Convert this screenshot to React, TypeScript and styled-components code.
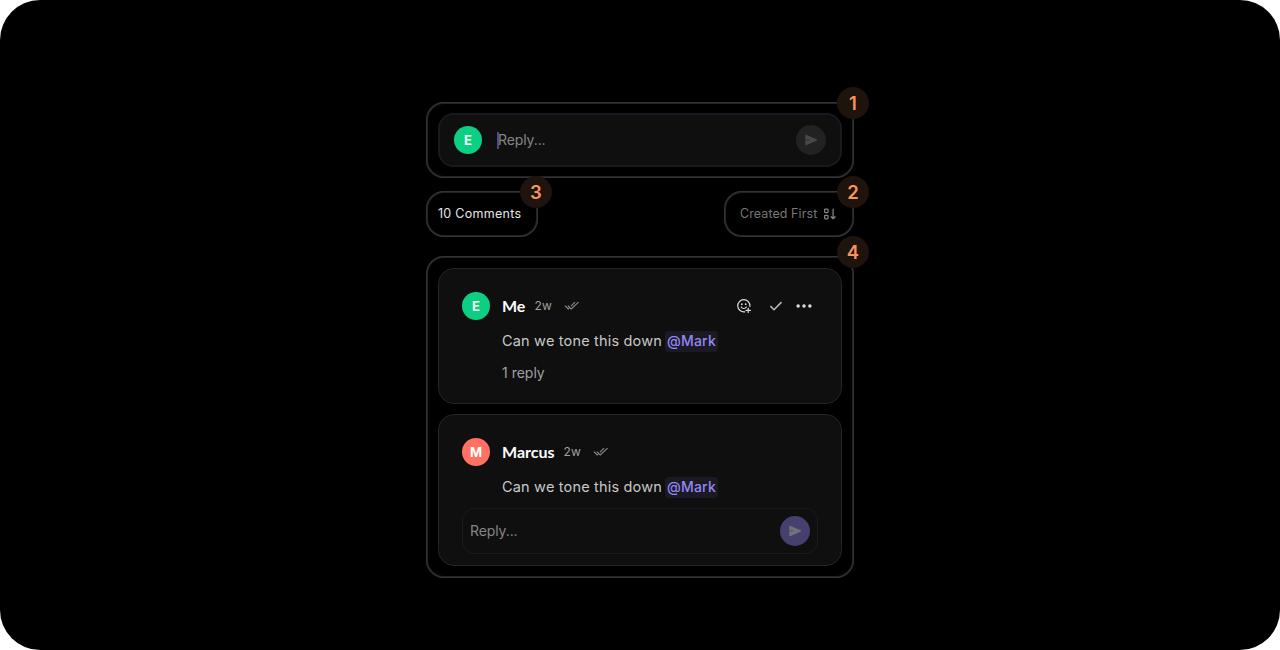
import React from "react";
import styled, { createGlobalStyle } from "styled-components";

const Global = createGlobalStyle`
  *, *::before, *::after { box-sizing: border-box; }
  body { margin: 0; background: #fff; font-family: Inter, "Open Sans", sans-serif; }
`;

const Stage = styled.main`
  width: 1280px;
  height: 650px;
  background: #000;
  border-radius: 40px;
  display: flex;
  flex-direction: column;
  align-items: center;
  padding-top: 102px;
`;

const Column = styled.div`
  width: 428px;
  display: flex;
  flex-direction: column;
`;

const Frame = styled.section<{ $w?: number; $h: number; $mt?: number }>`
  position: relative;
  width: ${(p) => (p.$w ? `${p.$w}px` : "100%")};
  height: ${(p) => p.$h}px;
  margin-top: ${(p) => p.$mt ?? 0}px;
  border-radius: 18px;
  box-shadow: inset 0 0 0 1px #343434, inset 0 0 0 2px #222;
  padding: 12px;
  display: flex;
  flex-direction: column;
`;

const Badge = styled.span<{ $top?: number; $right?: number }>`
  position: absolute;
  top: ${(p) => p.$top ?? -15}px;
  right: ${(p) => p.$right ?? -15}px;
  width: 32px;
  height: 32px;
  border-radius: 50%;
  background: #1e130d;
  color: #f7935c;
  font: 600 18.5px/33px Inter, sans-serif;
  text-align: center;
`;

const Text = styled.span<{ $size: number; $color: string; $ls?: number; $ml?: number }>`
  font-size: ${(p) => p.$size}px;
  line-height: 20px;
  color: ${(p) => p.$color};
  letter-spacing: ${(p) => p.$ls ?? 0}px;
  margin-left: ${(p) => p.$ml ?? 0}px;
  white-space: nowrap;
`;

const Name = styled.strong`
  font: 700 16px/20px Lato, sans-serif;
  color: #fff;
  margin-left: 12px;
`;

const Composer = styled.div`
  flex: none;
  margin-top: -1px;
  height: 54px;
  border-radius: 16px;
  background: #0f0f0f;
  box-shadow: inset 0 0 0 1px #1b1a24, inset 0 0 0 2px #17171d;
  display: flex;
  align-items: center;
  padding: 0 16px;
`;

const Avatar = styled.span<{ $bg: string }>`
  width: 28px;
  height: 28px;
  border-radius: 50%;
  background: ${(p) => p.$bg};
  color: #fff;
  font: 700 13px/29px Inter, sans-serif;
  text-align: center;
  flex: none;
`;

const Caret = styled.i`
  width: 2px;
  height: 17px;
  margin-left: 15px;
  margin-right: -1px;
  background: #504a88;
`;

const SendButton = styled.button<{ $bg: string; $fg: string }>`
  width: 30px;
  height: 30px;
  margin-left: auto;
  border: 0;
  padding: 0;
  border-radius: 50%;
  background: ${(p) => p.$bg};
  color: ${(p) => p.$fg};
  display: grid;
  place-items: center;
`;

const Toolbar = styled.div`
  display: flex;
  justify-content: space-between;
  margin-top: 13px;
`;

const InlineRow = styled.div`
  display: flex;
  align-items: center;
  height: 22px;
  white-space: nowrap;
`;

const Card = styled.article<{ $h: number }>`
  height: ${(p) => p.$h}px;
  flex: none;
  border-radius: 16px;
  border: 1px solid #242424;
  background: #0f0f0f;
  padding: 23px;
  & + & { margin-top: 10px; }
`;

const Header = styled.header`
  display: flex;
  align-items: center;
  height: 28px;
`;

const Actions = styled.div`
  display: flex;
  align-items: center;
  margin-left: auto;
  margin-right: 6px;
  color: #ddd;
`;

const Body = styled.div<{ $mt: number }>`
  margin: ${(p) => p.$mt}px 0 0 40px;
  height: 21px;
  display: flex;
  align-items: center;
`;

const MessageText = styled.span`
  width: 163px;
  font-size: 14.5px;
  line-height: 20px;
  letter-spacing: 0.18px;
  padding-bottom: 1px;
  color: #c8c8c8;
  white-space: nowrap;
`;

const Mention = styled.span`
  width: 53px;
  height: 21px;
  border-radius: 4px;
  background: #1b1924;
  color: #9388f5;
  font-size: 14px;
  line-height: 20px;
  letter-spacing: 0.2px;
  font-weight: 500;
  text-align: center;
  white-space: nowrap;
`;

const ReplyCount = styled.span`
  font-size: 14px;
  line-height: 20px;
  padding-bottom: 2px;
  color: #a0a0a0;
  white-space: nowrap;
`;

const ReplyBox = styled.div`
  margin-top: 10px;
  height: 46px;
  border: 1px solid #1a1a1a;
  border-radius: 12px;
  padding: 0 7px;
  display: flex;
  align-items: center;
`;

const SendIcon = () => (
  <svg width="14" height="14" viewBox="0 0 14 14" fill="currentColor">
    <path d="M1.2 2.5C1.1 1.9 1.6 1.6 2.1 1.8L12.6 6.3C13.2 6.6 13.2 7.4 12.6 7.7L2.1 12.2C1.6 12.4 1.1 12 1.2 11.5V7.6L5.4 7.3V6.7L1.2 6.4Z" />
  </svg>
);

const DoubleCheck = () => (
  <svg width="16" height="10" viewBox="0 0 16 10" fill="none" stroke="#8c8c8c" strokeWidth="1.1">
    <path d="M.9 4.7L4.2 8L5.1 7.1M11 1.2L7 5.2M3.9 4.7L7.2 8L14.6 1.2" />
  </svg>
);

const SortIcon = () => (
  <svg width="14" height="14" viewBox="0 0 14 14" fill="none" stroke="#858585" strokeWidth="1.25" strokeLinejoin="round" strokeLinecap="round">
    <rect x="1.6" y="2" width="3.4" height="3.6" rx=".8" />
    <rect x="1.6" y="8.3" width="3.4" height="3.6" rx=".8" />
    <path d="M10.1 2.2V11.6M8.1 9.7L10.1 11.7L12.1 9.7" />
  </svg>
);

const EmojiIcon = () => (
  <svg width="16" height="16" viewBox="0 0 16 16" fill="none" stroke="currentColor" strokeWidth="1.2" strokeLinecap="round">
    <path d="M13.9 8.3A6.1 6.1 0 1 0 8.8 13.8" />
    <path d="M5.2 9C6.2 11 9.3 11 10.3 9" />
    <path d="M12.2 10.2V14.6M10 12.4H14.4" />
    <circle cx="5.8" cy="6.2" r=".9" fill="currentColor" stroke="none" />
    <circle cx="9.7" cy="6.2" r=".9" fill="currentColor" stroke="none" />
  </svg>
);

const CheckIcon = () => (
  <svg width="14" height="12" viewBox="0 0 14 12" fill="none" stroke="#bbb" strokeWidth="1.5">
    <path d="M1.4 6.1L5 9.7L12.5 2.1" />
  </svg>
);

const MoreIcon = () => (
  <svg width="16" height="6" viewBox="0 0 16 6" fill="currentColor">
    <circle cx="2.1" cy="3" r="1.75" />
    <circle cx="8" cy="3" r="1.75" />
    <circle cx="13.9" cy="3" r="1.75" />
  </svg>
);

const Gap = styled.span<{ $w: number }>`
  width: ${(p) => p.$w}px;
  flex: none;
`;

const CommentHead = ({ initial, color, name, children }: { initial: string; color: string; name: string; children?: React.ReactNode }) => (
  <Header>
    <Avatar $bg={color}>{initial}</Avatar>
    <Name>{name}</Name>
    <Text $size={12} $color="#a0a0a0" $ml={9} $ls={0.2}>2w</Text>
    <Gap $w={12} />
    <DoubleCheck />
    {children}
  </Header>
);

const Message = () => (
  <Body $mt={11}>
    <MessageText>Can we tone this down</MessageText>
    <Mention>@Mark</Mention>
  </Body>
);

export default function App() {
  return (
    <>
      <Global />
      <Stage>
        <Column>
          <Frame $h={76}>
            <Composer>
              <Avatar $bg="#0dcf82">E</Avatar>
              <Caret />
              <Text $size={14} $color="#858585" $ls={-0.1}>Reply...</Text>
              <SendButton $bg="#222" $fg="#484848"><SendIcon /></SendButton>
            </Composer>
            <Badge>1</Badge>
          </Frame>
          <Toolbar>
            <Frame $w={112} $h={46}>
              <InlineRow><Text $size={12.5} $color="#e6e6e6" $ls={0.28}>10 Comments</Text></InlineRow>
              <Badge $right={-14}>3</Badge>
            </Frame>
            <Frame $w={130} $h={46}>
              <InlineRow>
                <Text $size={12.5} $color="#777" $ml={4} $ls={0.08}>Created First</Text>
                <Gap $w={6} />
                <SortIcon />
              </InlineRow>
              <Badge>2</Badge>
            </Frame>
          </Toolbar>
          <Frame $h={322} $mt={19}>
            <Card $h={136}>
              <CommentHead initial="E" color="#0dcf82" name="Me">
                <Actions>
                  <EmojiIcon />
                  <Gap $w={17} />
                  <CheckIcon />
                  <Gap $w={13} />
                  <MoreIcon />
                </Actions>
              </CommentHead>
              <Message />
              <Body $mt={11}><ReplyCount>1 reply</ReplyCount></Body>
            </Card>
            <Card $h={152}>
              <CommentHead initial="M" color="#ff7162" name="Marcus" />
              <Message />
              <ReplyBox>
                <Text $size={14} $color="#858585" $ls={-0.1}>Reply...</Text>
                <SendButton $bg="#45406e" $fg="#73727a"><SendIcon /></SendButton>
              </ReplyBox>
            </Card>
            <Badge $top={-20}>4</Badge>
          </Frame>
        </Column>
      </Stage>
    </>
  );
}
